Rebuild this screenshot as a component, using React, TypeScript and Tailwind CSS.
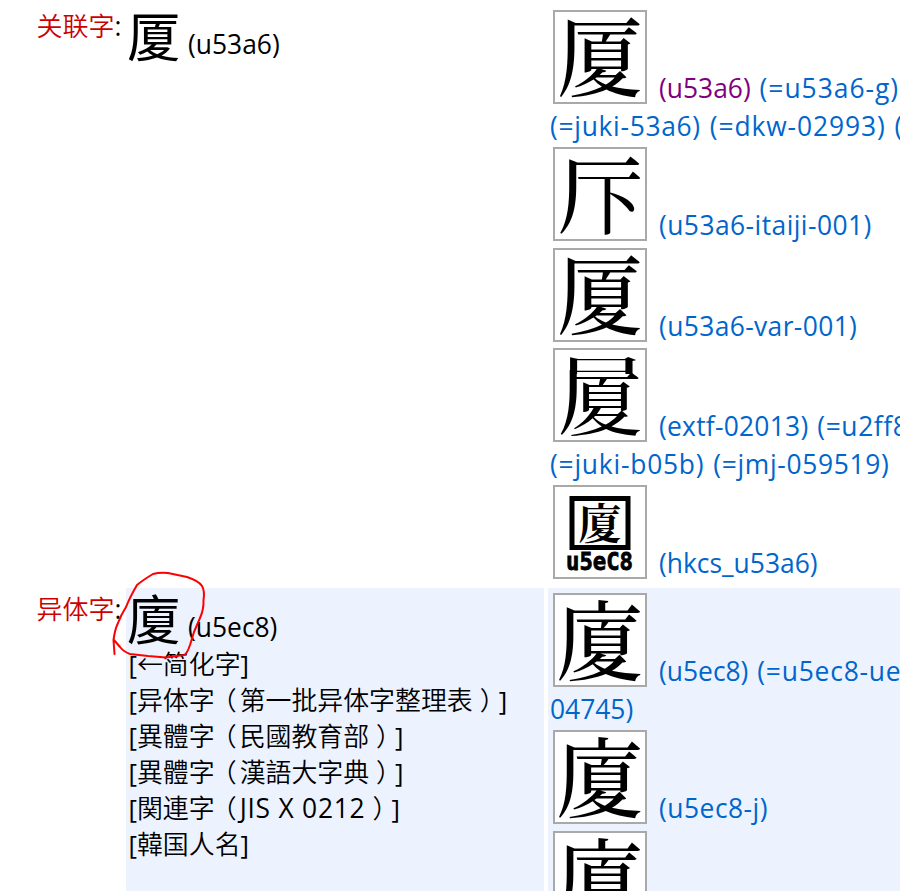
import type { ReactNode } from "react";

const cjk = "font-['Open_Sans','Noto_Sans_CJK_SC',sans-serif]";
const mincho = "[font-family:'Noto_Serif_CJK_JP','Noto_Sans_CJK_JP',serif]";

// One character stretched to fill the given area of a glyph tile
function Part({ ch, x, y, w, h, className = "font-medium" }: { ch: string; x: number; y: number; w: number; h: number; className?: string }) {
  return (
    <g transform={`translate(${x} ${y}) scale(${w / 100} ${h / 100})`}>
      <text x="0" y="88" fontSize="100" className={`${mincho} ${className}`}>{ch}</text>
    </g>
  );
}

function Tile({ children }: { children: ReactNode }) {
  return (
    <span className="block size-[94px] shrink-0 overflow-hidden border-2 border-[#a9a9a9] bg-white">
      <svg viewBox="0 0 90 90" className="block size-[90px]">{children}</svg>
    </span>
  );
}

function Entry({ tile, children, className = "h-[100px]" }: { tile: ReactNode; children: ReactNode; className?: string }) {
  return (
    <div className={`flex pl-[5px] ${className}`}>
      <Tile>{tile}</Tile>
      <span className="ml-3 pt-[60px] leading-[37px]">{children}</span>
    </div>
  );
}

// A bracketed note; the brackets keep the regular weight
function Note({ children }: { children: ReactNode }) {
  return <div>[<span className="font-[350]">{children}</span>]</div>;
}

function Open() {
  return <span className="inline-block w-[25px] -translate-x-[4px]">（</span>;
}

function Close() {
  return <span className="inline-block w-[26px] translate-x-[7px]">）</span>;
}

function Head({ ch, code }: { ch: string; code: string }) {
  return (
    <div className="flex h-[58px] pl-px">
      <span className="h-[58px] w-[54px] pt-[2.500px] text-[53.5px] leading-[58px]">{ch}</span>
      <span className="ml-[7px] pt-[21px] leading-9">{code}</span>
    </div>
  );
}

const plain = <Part ch="厦" x={2} y={2.5} w={86} h={86} />;
const dotted = <Part ch="廈" x={1.5} y={2} w={87} h={87} />;

export default function App() {
  return (
    <div className={`relative h-[891px] w-[900px] overflow-hidden bg-white text-[26.4px] whitespace-nowrap text-black ${cjk}`}>
      <div className="flex h-[588px]">
        <div className="w-[126px] shrink-0 pt-2 pl-[36.500px] leading-9">
          <span className="text-[26px] font-[350] text-[#cc0000]">关联字</span>:
        </div>
        <div className="w-[418px] shrink-0 pt-[5px]"><Head ch="厦" code="(u53a6)" /></div>
        <div className="ml-1 w-[352px] shrink-0 pt-2.5 text-[#0066cc] [word-spacing:2px]">
          <Entry tile={plain}><span className="text-[#800080]">(u53a6)</span> <span className="tracking-[1px]">(=u53a6-g)</span></Entry>
          <div className="h-[37px] pl-0.5 leading-[33px]"><span className="tracking-[0.7px]">(=juki-53a6)</span> <span className="tracking-[0.9px]">(=dkw-02993)</span> (=</div>
          <Entry className="h-[101px]" tile={<><Part ch="厂" x={2} y={2.5} w={86} h={86} /><Part ch="下" x={20.5} y={19} w={67} h={69} /></>}><span className="tracking-[0.45px]">(u53a6-itaiji-001)</span></Entry>
          <Entry tile={plain}><span className="tracking-[0.38px]">(u53a6-var-001)</span></Entry>
          <Entry tile={<>
            <svg width="90" height="24" viewBox="0 0 90 24"><Part ch="尸" x={1} y={4} w={87} h={46} /></svg>
            <svg y="20" width="23" height="70" viewBox="0 20 23 70"><Part ch="厂" x={2.6} y={2.5} w={86} h={86} /></svg>
            <Part ch="夏" x={13.5} y={20} w={74} h={68} />
          </>}><span className="tracking-[0.25px]">(extf-02013)</span> <span className="tracking-[0.6px]">(=u2ff8</span></Entry>
          <div className="h-[37px] pl-0.5 leading-[33px]"><span className="tracking-[0.78px]">(=juki-b05b)</span> <span className="tracking-[0.68px]">(=jmj-059519)</span></div>
          <Entry tile={<>
            <rect x="17" y="11.500" width="56" height="49" fill="none" stroke="#000" strokeWidth="5" />
            <Part ch="廈" x={23.5} y={15} w={43} h={42} className="font-bold" />
            <text x="11" y="82.500" fontSize="24" textLength="67" lengthAdjust="spacingAndGlyphs" stroke="#000" strokeWidth="0.8" className="font-['DejaVu_Sans_Mono',monospace] font-bold">u5eC8</text>
          </>}>(hkcs_u53a6)</Entry>
        </div>
      </div>
      <div className="flex h-[303px]">
        <div className="w-[126px] shrink-0 pt-[3px] pl-[36.500px] leading-9">
          <span className="text-[26px] font-[350] text-[#cc0000]">异体字</span>:
        </div>
        <div className="w-[418px] shrink-0 bg-[#ecf3ff]">
          <Head ch="廈" code="(u5ec8)" />
          <div className="pl-[2.500px] text-[25.9px] leading-9">
            <Note>←简化字</Note>
            <Note>异体字<Open />第一批异体字整理表<Close /></Note>
            <Note>異體字<Open />民國教育部<Close /></Note>
            <Note>異體字<Open />漢語大字典<Close /></Note>
            <Note>関連字<Open /><span className="text-[26.4px] font-normal tracking-[0.75px]">JIS X 0212</span><Close /></Note>
            <Note>韓国人名</Note>
          </div>
        </div>
        <div className="ml-1 w-[352px] shrink-0 bg-[#ecf3ff] pt-[5px] text-[#0066cc] [word-spacing:2px]">
          <Entry tile={dotted}>(u5ec8) <span className="tracking-[0.8px]">(=u5ec8-ue</span></Entry>
          <div className="h-[37px] pl-0.5 leading-[33px]">04745)</div>
          <Entry className="h-[101px]" tile={dotted}><span className="tracking-[0.5px]">(u5ec8-j)</span></Entry>
          <Entry tile={dotted}>{null}</Entry>
        </div>
      </div>
      <svg className="absolute top-[565px] left-[105px]" width="110" height="100" viewBox="105 565 110 100" fill="none" stroke="#f00" strokeWidth="2" strokeLinecap="round" strokeLinejoin="round">
        <path d="M114.5 654L113.5 640Q115 629 118 623Q121 615 126 607Q130 597 137 585Q143 580 153 574Q160 572 168 573L187 577Q199 581 202 586Q205 591 203.500 600Q204 609 200 618L194 632L190 645Q187 654 184 655L166 657.500L148 656L130 654Q124 652 120 647L114 640" />
      </svg>
    </div>
  );
}
